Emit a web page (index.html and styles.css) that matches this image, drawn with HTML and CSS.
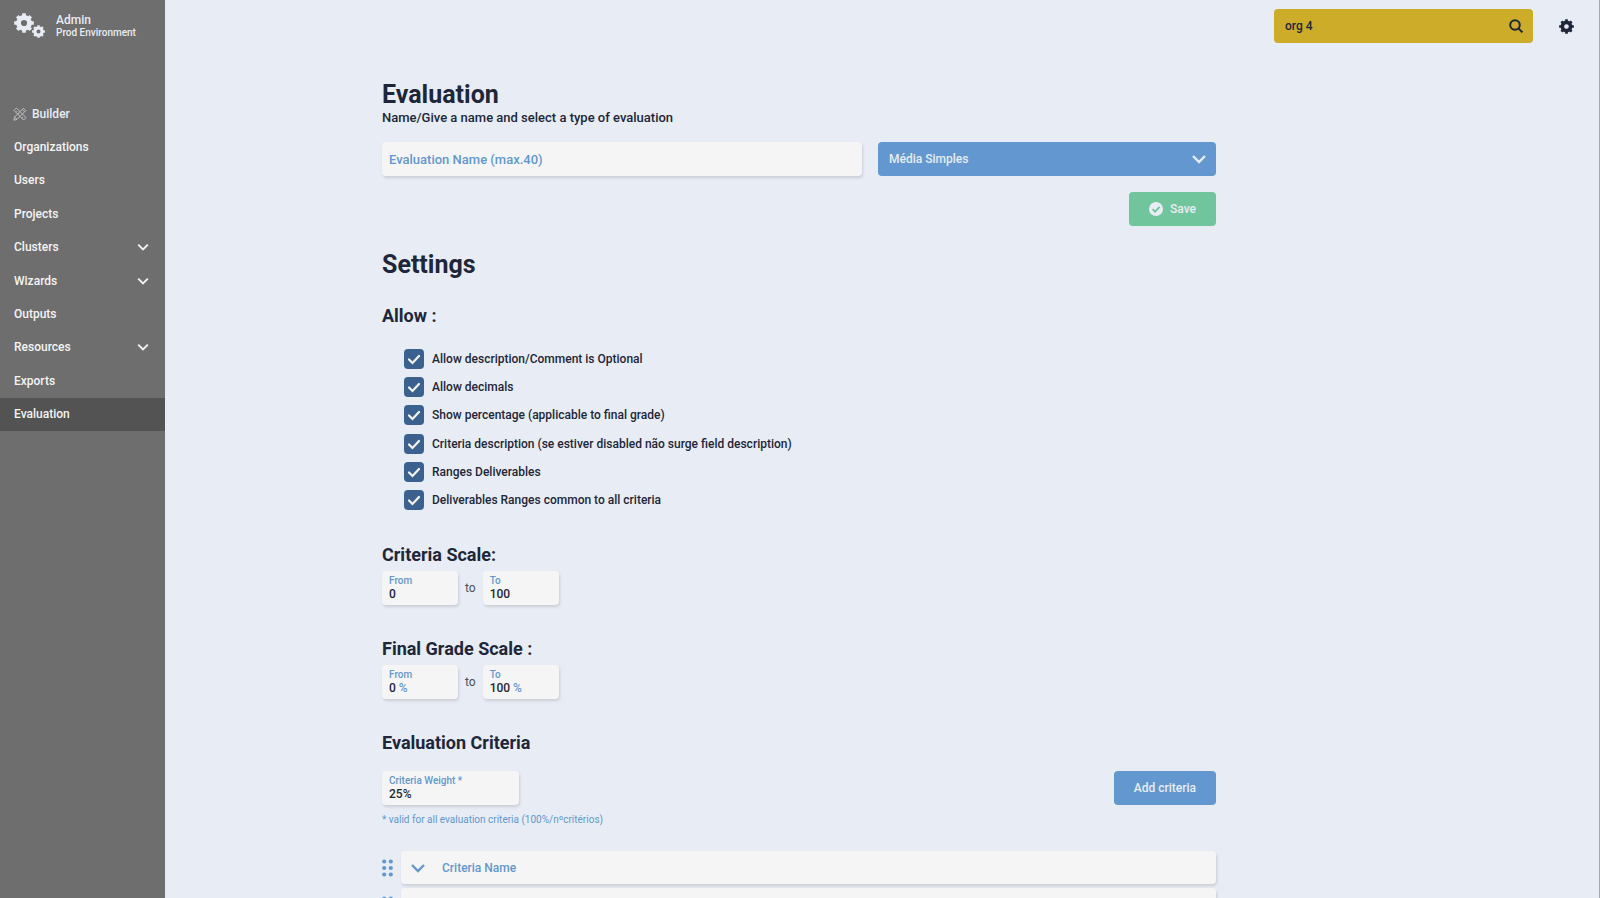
FILE: index.html
```html
<!DOCTYPE html>
<html lang="en">
<head>
  <meta charset="UTF-8">
  <meta name="viewport" content="width=device-width, initial-scale=1">
  <title>Evaluation</title>
  <link rel="stylesheet" href="styles.css">
</head>
<body>

<!-- shared icons -->
<svg class="sprite" aria-hidden="true">
  <symbol id="gear" viewBox="0 0 20 20">
    <circle cx="10" cy="10" r="5.5" fill="none" stroke="currentColor" stroke-width="4.8"/>
    <path d="M10 .2v4M10 15.8v4M.2 10h4M15.8 10h4M3.2 3.2l2.8 2.8M14 14l2.8 2.8M3.2 16.8l2.8-2.8M14 6l2.8-2.8" fill="none" stroke="currentColor" stroke-width="3.6"/>
  </symbol>
  <symbol id="chevron" viewBox="0 0 14 10">
    <path d="M1 2l6 6 6-6" fill="none" stroke="currentColor" stroke-width="2.4"/>
  </symbol>
  <symbol id="grip" viewBox="0 0 12 18">
    <g fill="currentColor">
      <circle cx="2.2" cy="2.5" r="2.1"/><circle cx="8.8" cy="2.5" r="2.1"/>
      <circle cx="2.2" cy="9" r="2.1"/><circle cx="8.8" cy="9" r="2.1"/>
      <circle cx="2.2" cy="15.5" r="2.1"/><circle cx="8.8" cy="15.5" r="2.1"/>
    </g>
  </symbol>
</svg>

<div class="app">
  <aside class="sidebar">
    <div class="brand">
      <svg class="brand-logo" viewBox="0 0 32 26" aria-hidden="true">
        <use href="#gear" x="0" y="0" width="20" height="20"/>
        <use href="#gear" x="18" y="12" width="13" height="13"/>
      </svg>
      <div>
        <div class="brand-name">Admin</div>
        <div class="brand-env">Prod Environment</div>
      </div>
    </div>
    <nav class="menu">
      <a href="#" class="menu-item builder">
        <svg class="builder-icon" viewBox="0 0 14 14" fill="none" stroke="currentColor" stroke-width=".9" aria-hidden="true">
          <path d="M1 3.4L3.4 1 13 10.6 10.6 13zM3 5.4l1.2-1.2M5 7.4l1.2-1.2M8.8 11.2l1.2-1.2"/>
          <path d="M10.4 1.2l2.4 2.4L4 12.4.8 13.2l.8-3.2zM9.2 2.4l2.4 2.4M1.6 10L4 12.4"/>
        </svg>
        Builder
      </a>
      <a href="#" class="menu-item">Organizations</a>
      <a href="#" class="menu-item">Users</a>
      <a href="#" class="menu-item">Projects</a>
      <a href="#" class="menu-item">Clusters <svg class="menu-arrow" aria-hidden="true"><use href="#chevron"/></svg></a>
      <a href="#" class="menu-item">Wizards <svg class="menu-arrow" aria-hidden="true"><use href="#chevron"/></svg></a>
      <a href="#" class="menu-item">Outputs</a>
      <a href="#" class="menu-item">Resources <svg class="menu-arrow" aria-hidden="true"><use href="#chevron"/></svg></a>
      <a href="#" class="menu-item">Exports</a>
      <a href="#" class="menu-item active">Evaluation</a>
    </nav>
  </aside>

  <main class="main">
    <header class="topbar">
      <div class="search">
        <input type="text" class="search-input" value="org 4" aria-label="Search organization">
        <button type="button" class="icon-btn" aria-label="Search">
          <svg class="search-icon" viewBox="0 0 14 14" fill="none" stroke="currentColor" stroke-width="2" aria-hidden="true">
            <circle cx="6" cy="6" r="4.8"/><path d="M9.4 9.4l4 4"/>
          </svg>
        </button>
      </div>
      <button type="button" class="icon-btn" aria-label="Settings">
        <svg class="settings-icon" aria-hidden="true"><use href="#gear"/></svg>
      </button>
    </header>

    <div class="page">
      <form class="content">
        <h1 class="title">Evaluation</h1>
        <p class="subtitle">Name/Give a name and select a type of evaluation</p>

        <div class="name-row">
          <input type="text" class="name-input" maxlength="40" placeholder="Evaluation Name (max.40)" aria-label="Evaluation Name">
          <div class="select">
            <select aria-label="Type of evaluation">
              <option>Média Simples</option>
            </select>
            <svg class="arrow" aria-hidden="true"><use href="#chevron"/></svg>
          </div>
        </div>
        <div class="actions">
          <button type="button" class="btn btn-save">
            <svg class="save-icon" viewBox="0 0 14 14" aria-hidden="true">
              <circle cx="7" cy="7" r="7" fill="#e8ecf4"/>
              <path d="M3.6 7.2l2.4 2.4 4.6-4.8" fill="none" stroke="#71c59d" stroke-width="1.8"/>
            </svg>
            Save
          </button>
        </div>

        <h2 class="title settings-title">Settings</h2>

        <h3 class="heading">Allow :</h3>
        <div class="checks">
          <label class="check"><input type="checkbox" checked> Allow description/Comment is Optional</label>
          <label class="check"><input type="checkbox" checked> Allow decimals</label>
          <label class="check"><input type="checkbox" checked> Show percentage (applicable to final grade)</label>
          <label class="check"><input type="checkbox" checked> Criteria description (se estiver disabled não surge field description)</label>
          <label class="check"><input type="checkbox" checked> Ranges Deliverables</label>
          <label class="check"><input type="checkbox" checked> Deliverables Ranges common to all criteria</label>
        </div>

        <h3 class="heading">Criteria Scale:</h3>
        <div class="scale">
          <label class="field">
            <span class="field-label">From</span>
            <input type="text" value="0">
          </label>
          <span class="to">to</span>
          <label class="field">
            <span class="field-label">To</span>
            <input type="text" value="100">
          </label>
        </div>

        <h3 class="heading">Final Grade Scale :</h3>
        <div class="scale">
          <label class="field">
            <span class="field-label">From</span>
            <span class="field-value"><input type="text" class="one-digit" value="0"> <span class="unit">%</span></span>
          </label>
          <span class="to">to</span>
          <label class="field">
            <span class="field-label">To</span>
            <span class="field-value"><input type="text" class="three-digits" value="100"> <span class="unit">%</span></span>
          </label>
        </div>

        <h3 class="heading">Evaluation Criteria</h3>
        <div class="weight-row">
          <label class="field weight">
            <span class="field-label">Criteria Weight *</span>
            <input type="text" value="25%">
          </label>
          <button type="button" class="btn btn-add">Add criteria</button>
        </div>
        <p class="note">* valid for all evaluation criteria (100%/nºcritérios)</p>

        <div class="criteria">
          <div class="criterion">
            <svg class="grip" aria-hidden="true"><use href="#grip"/></svg>
            <div class="criterion-card">
              <button type="button" class="icon-btn" aria-label="Expand criteria"><svg class="arrow" aria-hidden="true"><use href="#chevron"/></svg></button>
              <input type="text" placeholder="Criteria Name" aria-label="Criteria Name">
            </div>
          </div>
          <div class="criterion">
            <svg class="grip" aria-hidden="true"><use href="#grip"/></svg>
            <div class="criterion-card">
              <button type="button" class="icon-btn" aria-label="Expand criteria"><svg class="arrow" aria-hidden="true"><use href="#chevron"/></svg></button>
              <input type="text" placeholder="Criteria Name" aria-label="Criteria Name">
            </div>
          </div>
        </div>
      </form>
    </div>
  </main>
</div>

</body>
</html>
```
FILE: styles.css
```css
* {
  box-sizing: border-box;
}

body {
  margin: 0;
  font-family: Roboto, sans-serif;
  font-size: 12px;
  font-weight: 500;
  color: #1d2739;
  background: #e8ecf4;
}

input, select, button {
  font: inherit;
  color: inherit;
  border: none;
  padding: 0;
  background: none;
}

button, select {
  cursor: pointer;
}

h1, h2, h3, p {
  margin: 0;
}

.sprite {
  display: none;
}

.app {
  display: flex;
  height: 100vh;
  overflow: hidden;
}

/* sidebar */
.sidebar {
  flex: 0 0 165px;
  background: #6e6e6e;
  color: #f4f4f4;
}

.brand {
  display: flex;
  gap: 10px;
  height: 97px;
  padding: 13px 14px;
  color: #e8ecf4;
}

.brand-logo {
  width: 32px;
  height: 26px;
}

.brand-name {
  font-size: 12px;
  line-height: 15px;
}

.brand-env {
  font-size: 10px;
  line-height: 10px;
}

.menu {
  display: grid;
  grid-auto-rows: 1fr;
  height: 334px;
}

.menu-item {
  display: flex;
  align-items: center;
  justify-content: space-between;
  padding: 0 16px 0 14px;
  color: inherit;
  text-decoration: none;
}

.menu-item.active {
  background: #535353;
}

.menu-item.builder {
  justify-content: flex-start;
  gap: 5px;
  padding-left: 13px;
  color: #e8ecf4;
}

.builder-icon {
  width: 14px;
  height: 14px;
  opacity: 0.7;
}

.menu-arrow {
  width: 12px;
  height: 8px;
}

/* main */
.main {
  flex: 1;
  border-right: 1px solid #a6a9b0;
  overflow: hidden;
}

.topbar {
  display: flex;
  justify-content: flex-end;
  align-items: center;
  gap: 26px;
  padding: 9px 25px 0 0;
}

.icon-btn {
  display: flex;
}

.search {
  display: flex;
  align-items: center;
  width: 259px;
  height: 34px;
  padding: 0 10px 0 11px;
  background: #ccac28;
  border-radius: 4px;
}

.search-input {
  flex: 1;
  min-width: 0;
}

.search-icon {
  width: 14px;
  height: 14px;
}

.settings-icon {
  width: 15px;
  height: 15px;
}

/* right padding balances the sidebar so the form is centered in the window */
.page {
  padding: 37px 166px 0 0;
}

.content {
  max-width: 834px;
  margin: 0 auto;
}

.title {
  font-size: 25px;
  line-height: 30px;
  font-weight: 700;
}

.subtitle {
  font-size: 13px;
  line-height: 16px;
}

.name-row {
  display: grid;
  grid-template-columns: 480px 1fr;
  gap: 16px;
  margin-top: 16px;
}

.name-input,
.field,
.criterion-card {
  background: #f5f5f5;
  border-radius: 4px;
  box-shadow: 1px 2px 3px rgba(0, 0, 0, 0.13);
}

.name-input {
  height: 34px;
  padding: 0 7px;
  font-size: 13px;
}

::placeholder {
  color: #6298cf;
  opacity: 1;
}

.select {
  display: grid;
  align-items: center;
  height: 34px;
  color: #e8ecf4;
  background: #6298cf;
  border-radius: 4px;
}

.select select,
.select .arrow {
  grid-area: 1 / 1;
}

.select select {
  appearance: none;
  height: 34px;
  padding: 0 11px;
}

.select .arrow {
  justify-self: end;
  margin-right: 10px;
  pointer-events: none;
}

.arrow {
  width: 14px;
  height: 10px;
}

.actions {
  display: flex;
  justify-content: flex-end;
  margin-top: 16px;
}

.btn {
  display: flex;
  align-items: center;
  gap: 7px;
  height: 34px;
  padding: 0 20px;
  color: #e8ecf4;
  border-radius: 4px;
}

.btn-save {
  background: #71c59d;
}

.save-icon {
  width: 14px;
  height: 14px;
}

.btn-add {
  background: #6298cf;
}

.settings-title {
  margin: 24px 0 25px;
}

.heading {
  font-size: 18px;
  line-height: 22px;
  font-weight: 700;
}

.checks {
  display: grid;
  grid-auto-rows: 1fr;
  height: 169px;
  margin: 18px 0 30px 22px;
}

.check {
  display: flex;
  align-items: center;
  gap: 8px;
}

.check input {
  appearance: none;
  width: 20px;
  height: 20px;
  margin: 0;
  border-radius: 4px;
  background: #3b618e url("data:image/svg+xml,%3Csvg xmlns='http://www.w3.org/2000/svg' viewBox='0 0 20 20'%3E%3Cpath d='M5 10.5l3.5 3.5 6.5-7' fill='none' stroke='%23f5f5f5' stroke-width='2.2' stroke-linecap='round'/%3E%3C/svg%3E") center / 20px no-repeat;
}

.check input:not(:checked) {
  background-image: none;
}

.scale {
  display: flex;
  align-items: center;
  gap: 7px;
  margin: 5px 0 33px;
}

.to {
  font-weight: 400;
  color: #4a5160;
}

.field {
  display: flex;
  flex-direction: column;
  width: 76px;
  height: 34px;
  padding: 3px 7px;
}

.field-label {
  font-size: 10px;
  line-height: 13px;
  color: #6298cf;
}

.field input {
  width: 100%;
  height: 14px;
}

.field-value {
  display: flex;
  align-items: center;
  gap: 3px;
}

.field .one-digit {
  width: 1ch;
}

.field .three-digits {
  width: 3ch;
}

.unit {
  color: #6298cf;
}

.weight-row {
  display: flex;
  justify-content: space-between;
  margin-top: 17px;
}

.weight {
  width: 137px;
}

.note {
  margin-top: 9px;
  font-size: 10px;
  line-height: 12px;
  font-weight: 400;
  color: #6298cf;
}

.criteria {
  display: grid;
  gap: 4px;
  margin-top: 25px;
}

.criterion {
  display: flex;
  align-items: center;
  gap: 7px;
  color: #6298cf;
}

.grip {
  width: 12px;
  height: 18px;
}

.criterion-card {
  flex: 1;
  display: flex;
  align-items: center;
  gap: 17px;
  height: 33px;
  padding: 0 10px;
}

.criterion-card input {
  flex: 1;
  min-width: 0;
}
```
